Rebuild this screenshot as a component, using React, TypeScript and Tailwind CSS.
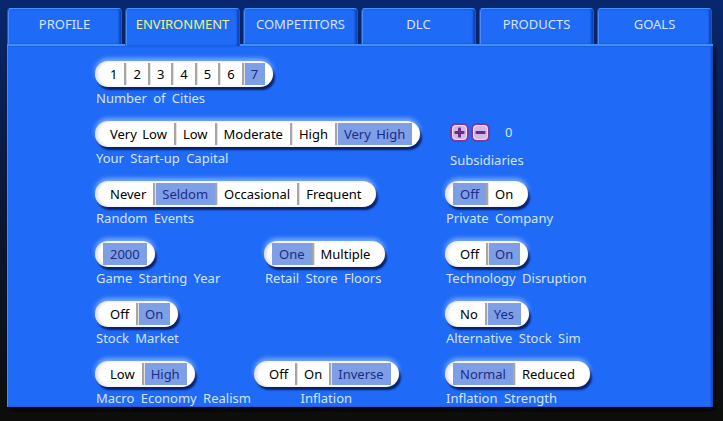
import React from 'react'
import clsx from 'clsx'

const TABS = ['PROFILE', 'ENVIRONMENT', 'COMPETITORS', 'DLC', 'PRODUCTS', 'GOALS']

interface PillProps {
  options: string[]
  selected: number
}

function Pill({ options, selected }: PillProps) {
  return (
    <div className="inline-flex h-[26px] items-stretch rounded-full bg-white px-[8px] shadow-[0_-3px_4px_rgba(190,215,255,0.55),2px_3px_2px_rgba(0,12,70,0.8),inset_3px_0_3px_rgba(0,0,0,0.12)]">
      {options.map((opt, i) => (
        <div
          key={opt}
          className={clsx(
            'my-[2px] flex items-center whitespace-nowrap px-[7px] text-[13px] leading-none [word-spacing:2px]',
            i > 0 && 'border-l-2 border-[#a6a6a6] shadow-[inset_1px_0_0_#e2e2e2]',
            i === selected ? 'bg-[#7e9ee6] text-[#1a2d86]' : 'text-black'
          )}
        >
          {opt}
        </div>
      ))}
    </div>
  )
}

function Label({ children, className }: { children: React.ReactNode; className?: string }) {
  return (
    <div className={clsx('mt-[2px] whitespace-nowrap text-[13px] leading-[18px] text-[#d4e4ff] [word-spacing:3px]', className)}>
      {children}
    </div>
  )
}

function Setting({ label, options, selected, center }: PillProps & { label: string; center?: boolean }) {
  return (
    <div className={clsx('flex flex-col', center ? 'items-center' : 'items-start')}>
      <Pill options={options} selected={selected} />
      <Label className={center ? '' : 'pl-[1px]'}>{label}</Label>
    </div>
  )
}

function RoundButton({ minus }: { minus?: boolean }) {
  return (
    <svg width="19" height="19" viewBox="0 0 19 19">
      <rect x="1" y="1" width="17" height="17" rx="5" fill="#eadcf4" stroke="#7a3a9c" strokeWidth="2" />
      <rect x="3" y="3" width="13" height="13" rx="4" fill="#8a4aae" opacity="0.25" />
      <rect x="4.5" y="8" width="10" height="3" rx="1" fill="#6a2a8c" />
      {!minus && <rect x="8" y="4.5" width="3" height="10" rx="1" fill="#6a2a8c" />}
    </svg>
  )
}

export default function App() {
  return (
    <div
      className="relative h-[421px] w-[723px] overflow-hidden bg-gradient-to-b from-[#08276f] via-[#0a1736] to-[#0d0d0b]"
      style={{ fontFamily: '"Noto Sans", "Open Sans", sans-serif' }}
    >
      {/* tab strip */}
      <div className="flex items-end gap-[3px] pl-[7px] pt-[8px]">
        {TABS.map((tab) => {
          const active = tab === 'ENVIRONMENT'
          return (
            <div
              key={tab}
              className={clsx(
                'relative flex w-[115px] items-center justify-center rounded-t-[4px] border border-b-0 border-[#1457cf] border-t-[#4593ff] bg-[#1f6bf7] text-[13px] shadow-[inset_1px_0_0_rgba(120,170,255,0.5),inset_-2px_0_2px_rgba(5,40,140,0.6)]',
                active ? 'z-10 -mb-[2px] h-[38px] pb-[6px] text-[#eef27c]' : 'h-[36px] pb-[4px] text-[#d6e4ff]'
              )}
            >
              {tab}
            </div>
          )
        })}
      </div>

      {/* settings panel */}
      <div className="ml-[7px] h-[363px] w-[706px] border-t-2 border-l border-[#3f8ff9] bg-[#1f6bf7] pl-[87px] pt-[15px] shadow-[2px_3px_3px_rgba(0,0,0,0.8),inset_-2px_0_2px_rgba(5,40,140,0.5)]">
        <div className="flex flex-col">
          <div className="flex h-[60px]">
            <div className="w-[350px]">
              <Setting label="Number of Cities" options={['1', '2', '3', '4', '5', '6', '7']} selected={6} />
            </div>
          </div>

          <div className="flex h-[60px]">
            <div className="w-[350px]">
              <Setting
                label="Your Start-up Capital"
                options={['Very Low', 'Low', 'Moderate', 'High', 'Very High']}
                selected={4}
              />
            </div>
            <div className="flex flex-col pl-[5px]">
              <div className="flex h-[26px] items-center gap-[2px] pb-[3px]">
                <RoundButton />
                <RoundButton minus />
                <span className="ml-[13px] text-[13px] text-[#d4e4ff]">0</span>
              </div>
              <Label className="mt-[4px]">Subsidiaries</Label>
            </div>
          </div>

          <div className="flex h-[60px]">
            <div className="w-[350px]">
              <Setting label="Random Events" options={['Never', 'Seldom', 'Occasional', 'Frequent']} selected={1} />
            </div>
            <Setting label="Private Company" options={['Off', 'On']} selected={0} />
          </div>

          <div className="flex h-[60px]">
            <div className="flex w-[350px]">
              <div className="w-[169px]">
                <Setting label="Game Starting Year" options={['2000']} selected={0} />
              </div>
              <Setting label="Retail Store Floors" options={['One', 'Multiple']} selected={0} />
            </div>
            <Setting label="Technology Disruption" options={['Off', 'On']} selected={1} />
          </div>

          <div className="flex h-[60px]">
            <div className="w-[350px]">
              <Setting label="Stock Market" options={['Off', 'On']} selected={1} />
            </div>
            <Setting label="Alternative Stock Sim" options={['No', 'Yes']} selected={1} />
          </div>

          <div className="flex h-[60px]">
            <div className="flex w-[350px]">
              <div className="w-[159px]">
                <Setting label="Macro Economy Realism" options={['Low', 'High']} selected={1} />
              </div>
              <Setting label="Inflation" options={['Off', 'On', 'Inverse']} selected={2} center />
            </div>
            <Setting label="Inflation Strength" options={['Normal', 'Reduced']} selected={0} />
          </div>
        </div>
      </div>
    </div>
  )
}
